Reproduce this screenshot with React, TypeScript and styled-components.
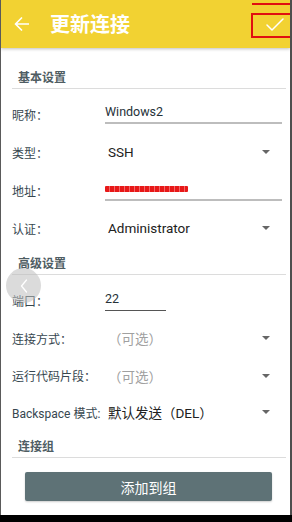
import React from "react";
import styled, { createGlobalStyle } from "styled-components";

const Global = createGlobalStyle`
  html, body { margin: 0; padding: 0; background: #ffffff; }
  body { font-family: Roboto, "Noto Sans CJK SC", sans-serif; }
  * { box-sizing: border-box; }
`;

const Frame = styled.div`
  width: 292px;
  height: 522px;
  display: flex;
  flex-direction: column;
  overflow: hidden;
`;

const Screen = styled.div`
  position: relative;
  flex: 1;
  display: flex;
  flex-direction: column;
  background: #ffffff;
  border-left: 1px solid #5a5a5a;
  border-right: 2px solid #4e4e4e;
  overflow: hidden;
`;

const BottomBar = styled.div`
  height: 7px;
  background: #000;
`;

const Header = styled.div`
  height: 48px;
  flex: none;
  display: flex;
  align-items: center;
  padding: 0 4px 0 13px;
  background: #f2d232;
  box-shadow: 0 1px 3px rgba(0, 0, 0, 0.25);
  position: relative;
  z-index: 1;
`;

const Title = styled.div`
  margin-left: 21px;
  color: #ffffff;
  font-size: 20px;
  font-weight: 700;
  line-height: 24px;
  font-family: "Noto Sans CJK SC", Roboto, sans-serif;
`;

const CheckWrap = styled.div`
  margin-left: auto;
  display: flex;
  align-items: center;
  margin-right: 2px;
  margin-top: 1px;
`;

const Content = styled.div`
  flex: 1;
  display: flex;
  flex-direction: column;
  padding: 13px 4px 0 11px;
`;

const SectionTitle = styled.div`
  padding: 7px 0 0 6px;
  line-height: 20px;
  font-size: 12px;
  font-weight: 700;
  color: #4f5d63;
  border-bottom: 1px solid #dcdcdc;
`;

const Rows = styled.div<{ $gap: number }>`
  display: flex;
  flex-direction: column;
  margin-top: ${(p) => p.$gap}px;
`;

const Row = styled.div<{ $h: number }>`
  height: ${(p) => p.$h}px;
  display: grid;
  grid-template-columns: 93px 1fr;
  align-items: center;
`;

const Label = styled.div`
  font-size: 12px;
  color: #37474f;
  white-space: nowrap;
`;

const InputBox = styled.div<{ $w?: number; $dark?: boolean; $mb: number }>`
  align-self: end;
  margin-bottom: ${(p) => p.$mb}px;
  margin-right: 4px;
  width: ${(p) => (p.$w ? `${p.$w}px` : "auto")};
  min-height: 20px;
  line-height: 16px;
  padding-bottom: 2px;
  font-size: 12.5px;
  color: #263238;
  border-bottom: ${(p) => (p.$dark ? "1px solid #555" : "2px solid #bdbdbd")};
  position: relative;
`;

const Redact = styled.div`
  position: absolute;
  left: 0;
  top: 5px;
  width: 83px;
  height: 6px;
  border-radius: 1px;
  background: repeating-linear-gradient(
    90deg,
    #e81818 0px,
    #e81818 4px,
    #f06a6a 4px,
    #f06a6a 5px
  );
`;

const SelectBox = styled.div`
  display: flex;
  align-items: center;
  justify-content: space-between;
  padding: 0 16px 0 3px;
`;

const SelectText = styled.span<{ $placeholder?: boolean }>`
  font-size: 13.5px;
  color: ${(p) => (p.$placeholder ? "#a0a0a0" : "#212121")};
  white-space: nowrap;
`;

const Caret = styled.span`
  width: 0;
  height: 0;
  border-left: 4px solid transparent;
  border-right: 4px solid transparent;
  border-top: 4.5px solid #666;
`;

const Button = styled.div`
  margin: 14px 14px 0 13px;
  height: 29px;
  display: flex;
  align-items: center;
  justify-content: center;
  background: #5e7276;
  color: #ffffff;
  font-size: 14px;
  border-radius: 2px;
  box-shadow: 0 1px 2px rgba(0, 0, 0, 0.2);
`;

const RedLine = styled.div`
  position: absolute;
  left: 251px;
  top: 3px;
  width: 50px;
  height: 2px;
  background: #e01010;
  z-index: 5;
`;

const RedBox = styled.div`
  position: absolute;
  left: 250px;
  top: 13px;
  width: 50px;
  height: 25px;
  border: 2px solid #e01010;
  z-index: 5;
`;

const FloatBtn = styled.div`
  position: absolute;
  left: 5px;
  top: 268px;
  width: 35px;
  height: 35px;
  border-radius: 50%;
  background: rgba(190, 190, 190, 0.55);
  display: flex;
  align-items: center;
  justify-content: center;
  z-index: 4;
`;

const BackArrow = () => (
  <svg width="15" height="14" viewBox="0 0 15 14" fill="none">
    <path d="M14.5 7H1.5M7.5 1L1.5 7L7.5 13" stroke="#fff" strokeWidth="1.7" strokeLinecap="round" strokeLinejoin="round" />
  </svg>
);

const Check = () => (
  <svg width="18" height="13" viewBox="0 0 18 13" fill="none">
    <path d="M1 7L6 12L17 1" stroke="#fff" strokeWidth="1.5" strokeLinecap="round" strokeLinejoin="round" />
  </svg>
);

const Chevron = () => (
  <svg width="8" height="14" viewBox="0 0 8 14" fill="none">
    <path d="M6.5 1L1.5 7L6.5 13" stroke="#fff" strokeWidth="1.3" strokeLinecap="round" strokeLinejoin="round" />
  </svg>
);

export default function App() {
  return (
    <Frame>
      <Global />
      <Screen>
        <Header>
          <BackArrow />
          <Title>更新连接</Title>
          <CheckWrap>
            <Check />
          </CheckWrap>
        </Header>
        <RedLine />
        <RedBox />
        <FloatBtn>
          <Chevron />
        </FloatBtn>
        <Content>
          <SectionTitle>基本设置</SectionTitle>
          <Rows $gap={6}>
            <Row $h={38}>
              <Label>昵称：</Label>
              <InputBox $mb={9}>Windows2</InputBox>
            </Row>
            <Row $h={38}>
              <Label>类型：</Label>
              <SelectBox>
                <SelectText>SSH</SelectText>
                <Caret />
              </SelectBox>
            </Row>
            <Row $h={38}>
              <Label>地址：</Label>
              <InputBox $mb={8}>
                <Redact />
              </InputBox>
            </Row>
            <Row $h={38}>
              <Label>认证：</Label>
              <SelectBox>
                <SelectText>Administrator</SelectText>
                <Caret />
              </SelectBox>
            </Row>
          </Rows>
          <SectionTitle>高级设置</SectionTitle>
          <Rows $gap={6}>
            <Row $h={38}>
              <Label>端口：</Label>
              <InputBox $mb={8} $w={61} $dark>22</InputBox>
            </Row>
            <Row $h={38}>
              <Label>连接方式：</Label>
              <SelectBox>
                <SelectText $placeholder>（可选）</SelectText>
                <Caret />
              </SelectBox>
            </Row>
            <Row $h={37}>
              <Label>运行代码片段：</Label>
              <SelectBox>
                <SelectText $placeholder>（可选）</SelectText>
                <Caret />
              </SelectBox>
            </Row>
            <Row $h={36}>
              <Label>Backspace 模式:</Label>
              <SelectBox>
                <SelectText>默认发送（DEL）</SelectText>
                <Caret />
              </SelectBox>
            </Row>
          </Rows>
          <SectionTitle>连接组</SectionTitle>
          <Button>添加到组</Button>
        </Content>
      </Screen>
      <BottomBar />
    </Frame>
  );
}
